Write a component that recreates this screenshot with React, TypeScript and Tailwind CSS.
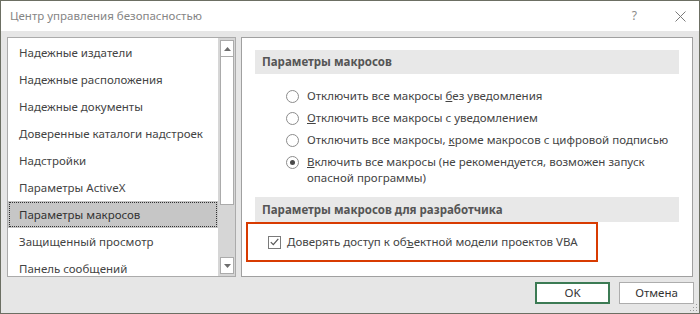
import React from 'react'

const listItems = [
  'Надежные издатели',
  'Надежные расположения',
  'Надежные документы',
  'Доверенные каталоги надстроек',
  'Надстройки',
  'Параметры ActiveX',
  'Параметры макросов',
  'Защищенный просмотр',
  'Панель сообщений',
]

function Radio({ checked }: { checked?: boolean }) {
  return (
    <span className="w-[13px] h-[13px] shrink-0 rounded-full border border-[#8c8c8c] bg-white flex items-center justify-center">
      {checked && <span className="w-[5px] h-[5px] rounded-full bg-[#4a4a4a]" />}
    </span>
  )
}

function Arrow({ up }: { up?: boolean }) {
  return (
    <svg width="7" height="4" viewBox="0 0 7 4">
      {up ? <polygon points="0,4 7,4 3.5,0" fill="#6e6e6e" /> : <polygon points="0,0 7,0 3.5,4" fill="#6e6e6e" />}
    </svg>
  )
}

function App() {
  return (
    <div className="relative w-[700px] h-[314px] flex flex-col border border-[#6c6f63] bg-[#e6e6e6] font-['Noto_Sans','Open_Sans',sans-serif] text-[11.5px] text-[#444444] overflow-hidden">
      {/* title bar */}
      <div className="h-[30px] shrink-0 bg-white flex items-center pl-[9px] pr-[13px] text-[12px] text-[#858585]">
        <span className="text-[11.5px]">Центр управления безопасностью</span>
        <span className="ml-auto mr-[38px] text-[#8a8a8a]">?</span>
        <svg width="11" height="11" viewBox="0 0 11 11">
          <path d="M0.5 0.5 L10.5 10.5 M10.5 0.5 L0.5 10.5" stroke="#7a7a7a" strokeWidth="1" />
        </svg>
      </div>

      {/* body */}
      <div className="flex gap-[5px] pt-[6px] pl-[6px]">
        {/* left list */}
        <div className="w-[229px] h-[240px] border border-[#ababab] bg-white flex overflow-hidden">
          <div className="flex-1 flex flex-col pt-[1px]">
            {listItems.map((item) => (
              <div
                key={item}
                className={
                  item === 'Параметры макросов'
                    ? 'h-[27px] shrink-0 flex items-center pl-[11px] bg-[#c6c6c6] outline-1 outline-dotted outline-[#333333] -outline-offset-2 text-[#333333]'
                    : 'h-[27px] shrink-0 flex items-center pl-[11px]'
                }
              >
                {item}
              </div>
            ))}
          </div>
          <div className="w-[17px] shrink-0 flex flex-col bg-[#d6d6d6] border-l border-[#d6d6d6] p-[1px] pt-[2px]">
            <div className="h-[17px] shrink-0 bg-white border border-[#ababab] flex items-center justify-center">
              <Arrow up />
            </div>
            <div className="h-[148px] shrink-0 bg-white border border-[#ababab] border-t-0" />
            <div className="flex-1" />
            <div className="h-[17px] shrink-0 bg-white border border-[#ababab] flex items-center justify-center mb-[1px]">
              <Arrow />
            </div>
          </div>
        </div>

        {/* right panel */}
        <div className="w-[452px] h-[240px] border border-[#a0a0a0] bg-white flex flex-col pt-[12px]">
          <div className="mx-[13px] h-[24px] bg-[#e8e8e8] flex items-center pl-[7px] font-bold text-[#555555]">
            Параметры макросов
          </div>
          <div className="flex flex-col gap-[6px] pl-[44px] pt-[14px]">
            <div className="flex items-center gap-[8px] h-[16px]">
              <Radio />
              <span>Отключить все макросы <u>б</u>ез уведомления</span>
            </div>
            <div className="flex items-center gap-[8px] h-[16px]">
              <Radio />
              <span><u>О</u>тключить все макросы с уведомлением</span>
            </div>
            <div className="flex items-center gap-[8px] h-[16px]">
              <Radio />
              <span>Отключить все макросы, <u>к</u>роме макросов с цифровой подписью</span>
            </div>
            <div className="flex items-start gap-[8px]">
              <div className="h-[16px] flex items-center"><Radio checked /></div>
              <span className="leading-[16px]">
                <u>В</u>ключить все макросы (не рекомендуется, возможен запуск
                <br />
                опасной программы)
              </span>
            </div>
          </div>
          <div className="mx-[13px] mt-[11px] h-[25px] bg-[#e8e8e8] flex items-center pl-[7px] font-bold text-[#555555]">
            Параметры макросов для разработчика
          </div>
          <div className="ml-[4px] w-[352px] h-[40px] border-2 border-[#d83b01] flex items-center pl-[20px] gap-[6px]">
            <span className="w-[13px] h-[13px] shrink-0 border border-[#7a7a7a] bg-white flex items-center justify-center">
              <svg width="9" height="8" viewBox="0 0 9 8">
                <path d="M0.8 4.2 L3.3 6.7 L8.3 0.8" fill="none" stroke="#555555" strokeWidth="1.2" />
              </svg>
            </span>
            <span>Доверять доступ к об<u>ъ</u>ектной модели проектов VBA</span>
          </div>
        </div>
      </div>

      {/* buttons */}
      <div className="flex justify-end gap-[9px] pt-[5px] pr-[5px]">
        <button className="w-[75px] h-[22px] bg-white border-2 border-[#3c7b54] text-[#333333] flex items-center justify-center">
          OK
        </button>
        <button className="w-[75px] h-[22px] bg-white border border-[#adadad] text-[#333333] flex items-center justify-center">
          Отмена
        </button>
      </div>

      {/* resize grip */}
      <svg className="absolute right-[1px] bottom-[1px]" width="8" height="8" viewBox="0 0 8 8">
        <rect x="6" y="0" width="1" height="1" fill="#9a9a9a" />
        <rect x="3" y="3" width="1" height="1" fill="#9a9a9a" />
        <rect x="6" y="3" width="1" height="1" fill="#9a9a9a" />
        <rect x="0" y="6" width="1" height="1" fill="#9a9a9a" />
        <rect x="3" y="6" width="1" height="1" fill="#9a9a9a" />
        <rect x="6" y="6" width="1" height="1" fill="#9a9a9a" />
      </svg>
    </div>
  )
}

export default App
